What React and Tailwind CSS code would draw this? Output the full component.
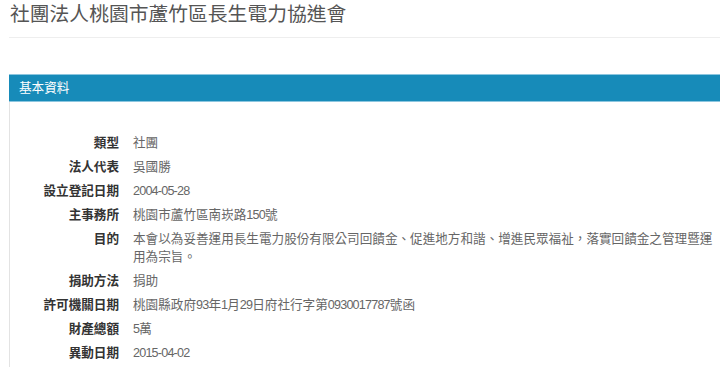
import React from "react";

const rows = [
  ["類型", "社團"],
  ["法人代表", "吳國勝"],
  ["設立登記日期", "2004-05-28"],
  ["主事務所", "桃園市蘆竹區南崁路150號"],
  ["目的", "本會以為妥善運用長生電力股份有限公司回饋金、促進地方和諧、增進民眾福祉，落實回饋金之管理暨運用為宗旨。"],
  ["捐助方法", "捐助"],
  ["許可機關日期", "桃園縣政府93年1月29日府社行字第0930017787號函"],
  ["財產總額", "5萬"],
  ["異動日期", "2015-04-02"],
];

function Txt({ s }) {
  const parts = s.split(/([0-9\-]+)/);
  return (
    <>
      {parts.map((p, i) =>
        /^[0-9\-]+$/.test(p) ? (
          <span key={i} className="tracking-[-0.8px]">{p}</span>
        ) : (
          <span key={i}>{p}</span>
        )
      )}
    </>
  );
}

export default function App() {
  return (
    <div className="w-[720px] h-[367px] overflow-hidden bg-white font-['Liberation_Sans','Noto_Sans_CJK_TC',sans-serif]">
      <div className="w-[760px] pl-[9px]">
        <h1 className="pt-[4px] pb-[13px] pl-[1px] text-[19.8px] leading-[20px] font-normal text-[#555] border-b border-[#eee]">
          社團法人桃園市蘆竹區長生電力協進會
        </h1>
        <div className="mt-[36px]">
          <div className="h-[28px] border-y border-[#8cc6df] bg-[#178bb9] flex items-center pl-[10px] text-[12.6px] text-white">
            基本資料
          </div>
          <div className="border-l border-[#e3e3e3] pt-[32px] pb-[20px] flex flex-col gap-[6px]">
            {rows.map(([k, v]) => (
              <div key={k} className="flex text-[12.6px] leading-[18px]">
                <div className="w-[109px] shrink-0 text-right font-bold text-[#333] whitespace-nowrap">
                  {k}
                </div>
                <div className="w-[586px] ml-[14px] text-[#666]">
                  <Txt s={v} />
                </div>
              </div>
            ))}
          </div>
        </div>
      </div>
    </div>
  );
}
